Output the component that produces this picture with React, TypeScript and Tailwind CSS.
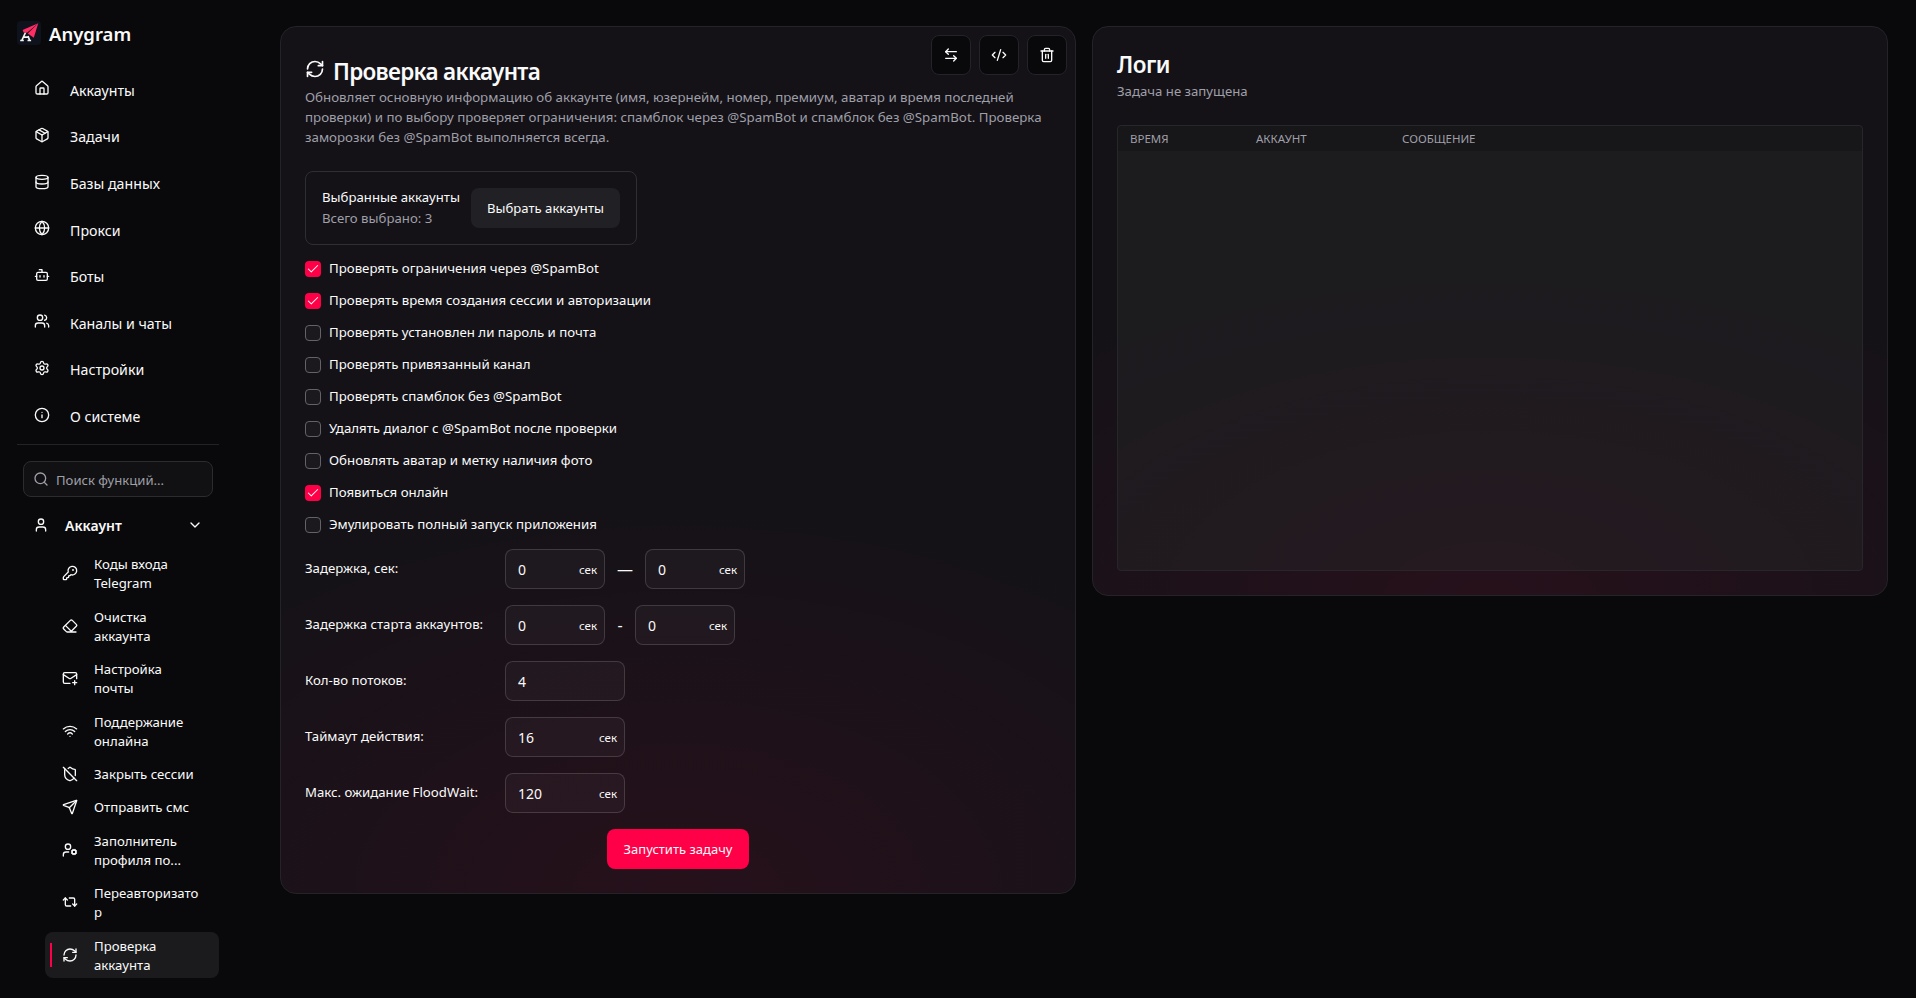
import {
  ArrowLeftRight, Bot, Check, ChevronDown, CodeXml, Database, Eraser, Globe, House, Info, KeyRound, MailPlus,
  Package, RefreshCw, Repeat2, Search, Send, Settings, ShieldOff, Trash2, User, UserCog, Users, Wifi,
} from 'lucide-react';
import clsx from 'clsx';

const NAV = [
  { label: 'Аккаунты', icon: House },
  { label: 'Задачи', icon: Package },
  { label: 'Базы данных', icon: Database },
  { label: 'Прокси', icon: Globe },
  { label: 'Боты', icon: Bot },
  { label: 'Каналы и чаты', icon: Users },
  { label: 'Настройки', icon: Settings },
  { label: 'О системе', icon: Info },
];

const FUNCTIONS = [
  { lines: ['Коды входа', 'Telegram'], icon: KeyRound },
  { lines: ['Очистка', 'аккаунта'], icon: Eraser },
  { lines: ['Настройка', 'почты'], icon: MailPlus },
  { lines: ['Поддержание', 'онлайна'], icon: Wifi },
  { lines: ['Закрыть сессии'], icon: ShieldOff },
  { lines: ['Отправить смс'], icon: Send },
  { lines: ['Заполнитель', 'профиля по...'], icon: UserCog },
  { lines: ['Переавторизато', 'р'], icon: Repeat2 },
  { lines: ['Проверка', 'аккаунта'], icon: RefreshCw, active: true },
];

const OPTIONS = [
  { label: 'Проверять ограничения через @SpamBot', checked: true },
  { label: 'Проверять время создания сессии и авторизации', checked: true },
  { label: 'Проверять установлен ли пароль и почта', checked: false },
  { label: 'Проверять привязанный канал', checked: false },
  { label: 'Проверять спамблок без @SpamBot', checked: false },
  { label: 'Удалять диалог с @SpamBot после проверки', checked: false },
  { label: 'Обновлять аватар и метку наличия фото', checked: false },
  { label: 'Появиться онлайн', checked: true },
  { label: 'Эмулировать полный запуск приложения', checked: false },
];

const Logo = () => (
  <svg viewBox="0 0 24 24" className="size-6 shrink-0">
    <rect width="24" height="24" rx="4" fill="#0e121d" />
    <path d="M5 19 8.500 11.500M11 15l1.500 4M3.200 19.500h3.600M10.500 19.500h3.600M6.500 16.200h5.500" fill="none" stroke="#f4f4f5" strokeWidth="1.700" />
    <path d="M21.200 2.200 5.600 9l1 2.600 3.400.200z" fill="#ff2d63" />
    <path d="M21.200 2.200 10.800 12.600l6 4.200z" fill="#ff2d63" />
  </svg>
);

const Sidebar = () => (
  <aside className="w-[219px] shrink-0 pl-[17px]">
    <div className="flex items-center gap-2 mt-[21px] h-6">
      <Logo />
      <span className="text-[18.500px] leading-6 font-semibold pt-0.5">Anygram</span>
    </div>
    <nav className="mt-[22px]">
      {NAV.map(({ label, icon: Icon }) => (
        <a key={label} className="flex items-center h-[46.625px] pl-[17px] gap-5">
          <Icon size={16} className="shrink-0 -mt-1" />
          <span className="text-[14.200px]">{label}</span>
        </a>
      ))}
    </nav>
    <hr className="border-[#232326] mt-1" />
    <div className="flex items-center gap-[7px] mx-1.5 mt-4 h-9 px-[9px] rounded-lg border border-[#2c2c30] bg-[#111113] text-[#9f9fa8]">
      <Search size={16} />
      <span className="text-[13.100px] pt-[3px]">Поиск функций...</span>
    </div>
    <div className="flex items-center h-8 mt-3 pl-4">
      <User size={16} />
      <span className="ml-4 pt-px text-sm font-semibold">Аккаунт</span>
      <ChevronDown size={16} className="ml-auto mr-4" />
    </div>
    <ul className="flex flex-col gap-1.5 mt-[9px] ml-7">
      {FUNCTIONS.map(({ lines, icon: Icon, active }) => (
        <li key={lines[0]} className={clsx('relative flex items-center gap-4 pl-[17px] py-1 rounded-lg', active && 'bg-[#1b1b1d]')}>
          {active && <span className="absolute left-[5px] top-1/2 -translate-y-1/2 w-0.5 h-6 bg-[#ff0048]" />}
          <Icon size={16} className="shrink-0" />
          <div className="pt-px -mb-px text-[13.200px] leading-[19.250px] whitespace-nowrap">
            {lines.map(line => <div key={line}>{line}</div>)}
          </div>
        </li>
      ))}
    </ul>
  </aside>
);

const NumberInput = ({ value, wide, unit }: { value: string; wide?: boolean; unit?: boolean }) => (
  <div className={clsx('flex items-center h-10 rounded-lg border border-white/15 bg-white/[0.030] pl-3 pr-[7px]', wide ? 'w-[120px]' : 'w-[100px]')}>
    <span className="text-sm pt-0.5">{value}</span>
    {unit && <span className="ml-auto text-[11.500px] pt-0.5">сек</span>}
  </div>
);

const Field = ({ label, children }: { label: string; children: React.ReactNode }) => (
  <div className="flex items-center h-10">
    <span className="w-[200px] text-[13.200px]">{label}</span>
    {children}
  </div>
);

const TaskCard = () => (
  <section className="relative w-[796px] shrink-0 h-[868px] rounded-2xl border border-[#242327] bg-[#141217] bg-[radial-gradient(670px_400px_at_50%_100%,rgba(255,0,72,0.080),transparent)] p-6">
    <div className="absolute top-2 right-2 flex gap-2">
      {[ArrowLeftRight, CodeXml, Trash2].map((Icon, i) => (
        <button key={i} className="size-10 flex items-center justify-center rounded-lg border border-[#242327] bg-[#09090b]">
          <Icon size={16} />
        </button>
      ))}
    </div>
    <h1 className="flex items-center gap-2 h-9 text-[22.500px] tracking-[-0.7px] font-semibold">
      <RefreshCw size={20} />
      <span className="pt-1.5">Проверка аккаунта</span>
    </h1>
    <div className="text-[13.300px] leading-5 text-[#9f9fa8] whitespace-nowrap">
      <div>Обновляет основную информацию об аккаунте (имя, юзернейм, номер, премиум, аватар и время последней</div>
      <div>проверки) и по выбору проверяет ограничения: спамблок через @SpamBot и спамблок без @SpamBot. Проверка</div>
      <div>заморозки без @SpamBot выполняется всегда.</div>
    </div>
    <div className="flex items-center w-[332px] h-[74px] mt-6 px-4 rounded-lg border border-[#2f2e33] justify-between">
      <div className="text-[13.200px] leading-[21px] whitespace-nowrap">
        <div>Выбранные аккаунты</div>
        <div className="text-[#9f9fa8]">Всего выбрано: 3</div>
      </div>
      <button className="w-[149px] h-10 pt-0.5 rounded-lg bg-[#212125] text-[13.100px]">Выбрать аккаунты</button>
    </div>
    <div className="mt-2">
      {OPTIONS.map(({ label, checked }) => (
        <label key={label} className="flex items-center gap-2 h-8 text-[13.250px]">
          <span className={clsx('size-4 rounded flex items-center justify-center', checked ? 'bg-[#ff0048]' : 'border border-[#636267] bg-[#1b191e]')}>
            {checked && <Check size={14} strokeWidth={1.75} />}
          </span>
          {label}
        </label>
      ))}
    </div>
    <div className="flex flex-col gap-4 mt-2">
      <Field label="Задержка, сек:">
        <NumberInput value="0" unit />
        <span className="w-10 text-center">—</span>
        <NumberInput value="0" unit />
      </Field>
      <Field label="Задержка старта аккаунтов:">
        <NumberInput value="0" unit />
        <span className="w-[30px] text-center">-</span>
        <NumberInput value="0" unit />
      </Field>
      <Field label="Кол-во потоков:">
        <NumberInput value="4" wide />
      </Field>
      <Field label="Таймаут действия:">
        <NumberInput value="16" wide unit />
      </Field>
      <Field label="Макс. ожидание FloodWait:">
        <NumberInput value="120" wide unit />
      </Field>
    </div>
    <button className="block w-[142px] h-10 mt-4 pt-px mx-auto rounded-lg bg-[#ff0048] text-[13px]">Запустить задачу</button>
  </section>
);

const LogsCard = () => (
  <section className="flex flex-col w-[796px] shrink-0 h-[570px] rounded-2xl border border-[#242327] bg-[#141217] bg-[radial-gradient(670px_340px_at_50%_100%,rgba(255,0,72,0.080),transparent)] p-6">
    <h2 className="text-[22.500px] leading-7 tracking-[-0.5px] font-semibold">Логи</h2>
    <p className="text-[13.200px] leading-5 mt-0.5 text-[#9f9fa8]">Задача не запущена</p>
    <div className="flex-1 mt-6 rounded border border-[#27262a] bg-[#232325]/50">
      <div className="flex items-center h-[25px] px-3 rounded-t bg-[#171619] text-[11.500px] text-[#9f9fa8]">
        <span className="w-[126px]">ВРЕМЯ</span>
        <span className="w-[146px]">АККАУНТ</span>
        <span>СООБЩЕНИЕ</span>
      </div>
    </div>
  </section>
);

const App = () => (
  <div className="flex items-start w-[1916px] h-[998px] overflow-hidden bg-[#09090b] text-[#fafafa] font-['Noto_Sans','Open_Sans',sans-serif]">
    <Sidebar />
    <main className="flex items-start gap-4 ml-[61px] mt-[26px]">
      <TaskCard />
      <LogsCard />
    </main>
  </div>
);

export default App;
